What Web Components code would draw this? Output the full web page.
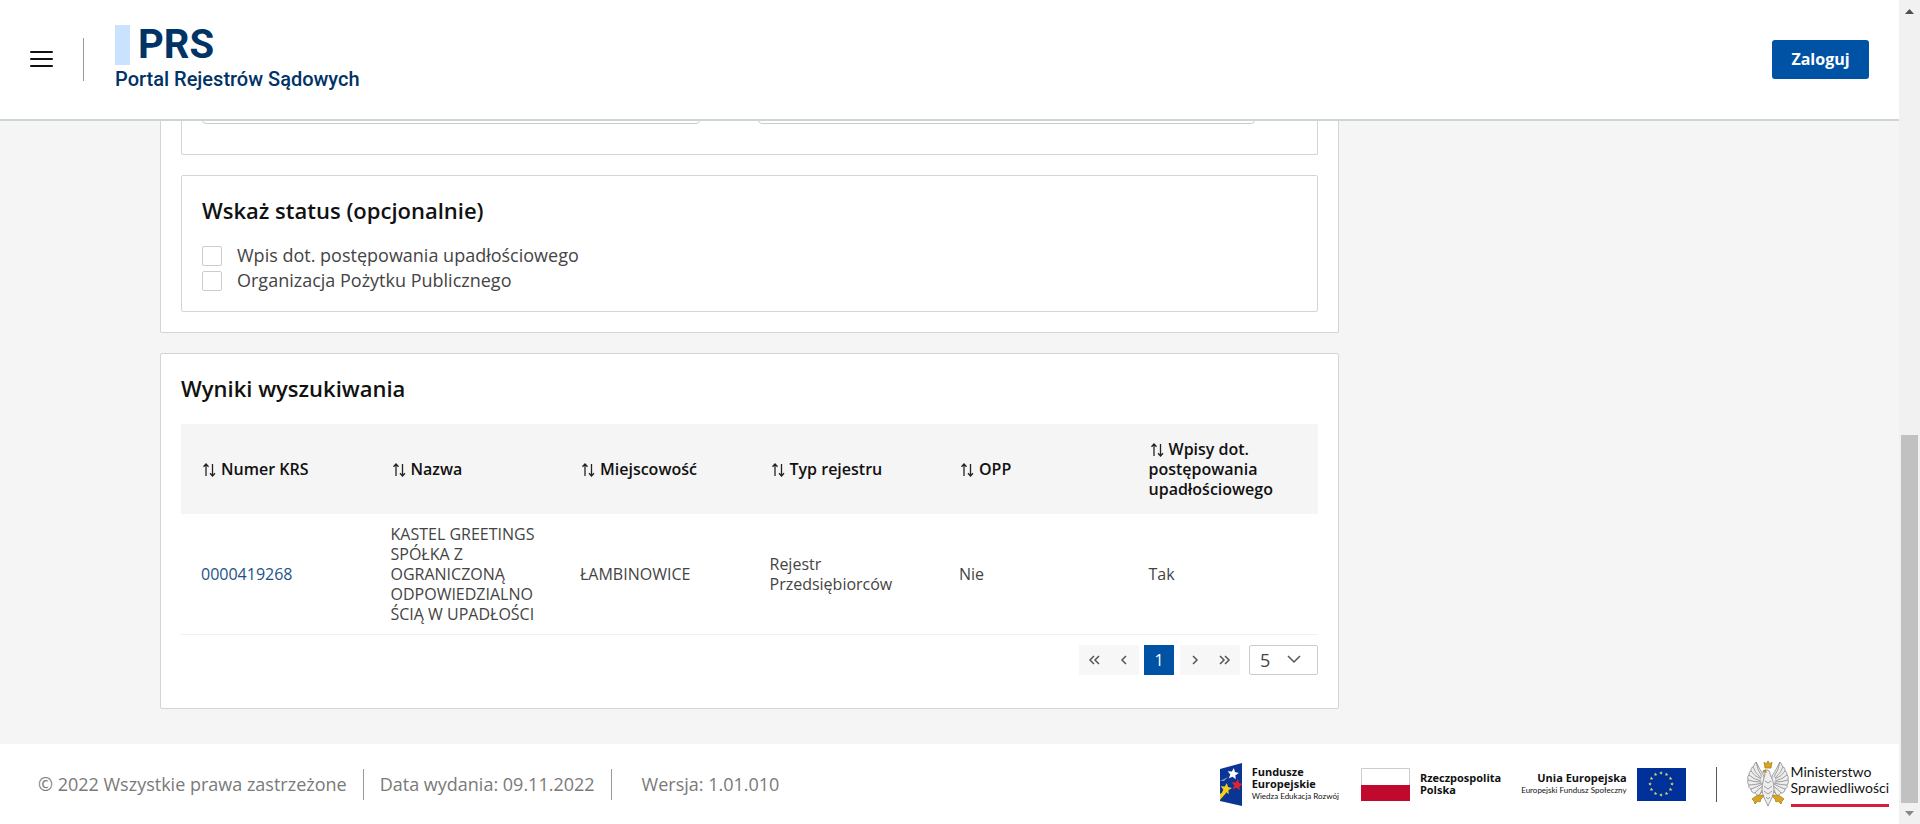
<!DOCTYPE html>
<html lang="pl">
<head>
<meta charset="utf-8">
<title>Portal Rejestrów Sądowych</title>
<style>
html, body { margin: 0; height: 100%; }
body { font-family: "Open Sans", sans-serif; color: #333; background: #f5f5f5; overflow: hidden; }
</style>
</head>
<body>
<prs-app></prs-app>
<script>
const make = (name, html) => customElements.define(name, class extends HTMLElement {
  constructor() {
    super();
    const t = document.createElement('template');
    t.innerHTML = html;
    this.attachShadow({ mode: 'open' }).append(t.content.cloneNode(true));
  }
});

make('prs-header', `
<style>
:host { display: flex; align-items: center; justify-content: space-between; box-sizing: border-box; height: 121px; padding: 0 30px 1px; background: #fff; border-bottom: 2px solid #ccd4d4; }
.left { display: flex; align-items: center; }
button { font: inherit; border: 0; margin: 0; cursor: pointer; }
.menu { display: flex; padding: 0; background: none; }
.rule { width: 1px; height: 43px; margin: 0 31px 0 30px; background: #999; }
a { display: block; color: #003366; text-decoration: none; font-family: Roboto, sans-serif; padding-bottom: 1px; }
.mark { display: flex; align-items: center; gap: 8px; height: 40px; font-size: 40px; font-weight: 700; line-height: 40px; }
.mark i { width: 15px; height: 40px; background: #c9e3ff; }
.name { display: block; font-size: 20px; font-weight: 500; line-height: 28px; }
.login { width: 97px; height: 39px; border-radius: 3px; background: #0052a5; color: #fff; font-size: 16px; font-weight: 700; }
</style>
<div class="left">
<button class="menu" aria-label="Menu"><svg width="23" height="18" viewBox="0 0 23 18" stroke="#111" stroke-width="2" stroke-linecap="round"><path d="M1 2H22M1 9H22M1 16H22"/></svg></button>
<div class="rule"></div>
<a href="#"><span class="mark"><i></i>PRS</span><span class="name">Portal Rejestrów Sądowych</span></a>
</div>
<button class="login">Zaloguj</button>`);

make('prs-card', `
<style>
:host { display: block; box-sizing: border-box; background: #fff; border: 1px solid #d4d4d4; border-radius: 2px; padding: 20px; }
</style><slot></slot>`);

make('prs-heading', `
<style>
:host { display: block; }
h2 { margin: 0; font-size: 22px; font-weight: 600; line-height: 32px; color: #111; }
</style><h2><slot></slot></h2>`);

make('prs-check', `
<style>
:host { display: block; }
label { display: flex; align-items: center; gap: 15px; font-size: 18px; line-height: 25px; color: #444; }
input { appearance: none; box-sizing: border-box; width: 20px; height: 20px; margin: 0; border: 1px solid #ccc; border-radius: 2px; background: #fff; }
</style><label><input type="checkbox"><slot></slot></label>`);

make('prs-filters', `
<style>
:host { display: block; }
.fields { padding: 0 62px 30px 20px; margin-bottom: 20px; border-top: 0; display: grid; grid-template-columns: 1fr 1fr; gap: 58px; }
input { box-sizing: border-box; width: 100%; height: 40px; border: 1px solid #ccc; border-radius: 4px; background: #fff; margin: 0; }
.outer { margin-top: -37px; padding-top: 0; border-top: 0; }
.list { margin-top: 17px; }
.status { padding: 18px 20px; }
</style>
<prs-card class="outer">
<prs-card class="fields"><input aria-label="Nazwa"><input aria-label="Miejscowość"></prs-card>
<prs-card class="status"><prs-heading>Wskaż status (opcjonalnie)</prs-heading>
<div class="list"><prs-check>Wpis dot. postępowania upadłościowego</prs-check><prs-check>Organizacja Pożytku Publicznego</prs-check></div>
</prs-card>
</prs-card>`);

make('prs-sort', `
<style>
:host { display: inline; }
svg { vertical-align: -2px; margin-right: 4px; }
</style><svg width="16" height="14" viewBox="0 0 16 14" fill="none" stroke="#222" stroke-width="1.3"><path d="M5 13V1M2.5 3.8L5 1 7.500 3.8M11.500 1V13M9 10.2L11.500 13 14 10.2"/></svg><slot></slot>`);

make('prs-pager', `
<style>
:host { display: flex; justify-content: flex-end; align-items: center; height: 30px; }
button { width: 30px; height: 30px; padding: 0; border: 0; background: #f7f7f7; display: flex; align-items: center; justify-content: center; font: inherit; font-size: 16px; }
.on { margin: 0 6px 0 5px; background: #0052a5; color: #fff; }
.size { margin-left: 9px; position: relative; display: flex; }
select { appearance: none; box-sizing: border-box; width: 69px; height: 30px; padding: 0 10px; border: 1px solid #ccc; border-radius: 2px; background: #fff; color: #444; font: inherit; font-size: 18px; }
.size svg { position: absolute; right: 17px; top: 10px; pointer-events: none; }
svg { fill: none; stroke: #555; stroke-width: 1.5; }
</style>
<button aria-label="Pierwsza"><svg width="14" height="10"><path d="M7 1L3 5 7 9M12 1L8 5 12 9"/></svg></button>
<button aria-label="Poprzednia"><svg width="14" height="10"><path d="M9 1L5 5 9 9"/></svg></button>
<button class="on">1</button>
<button aria-label="Następna"><svg width="14" height="10"><path d="M5 1l4 4-4 4"/></svg></button>
<button aria-label="Ostatnia"><svg width="14" height="10"><path d="M2 1l4 4-4 4M7 1l4 4-4 4"/></svg></button>
<div class="size"><select aria-label="Liczba wyników na stronie"><option>5</option><option>10</option></select><svg width="14" height="9"><path d="M1 1l6 6 6-6"/></svg></div>`);

make('prs-results', `
<style>
:host { display: block; margin-top: 20px; }
.box { padding: 18px 20px 33px; }
table { width: 100%; border-collapse: collapse; table-layout: fixed; margin: 20px 0 10px; font-size: 16px; line-height: 20px; }
th { height: 90px; box-sizing: border-box; padding: 15px 20px; background: #f5f5f5; color: #111; font-weight: 600; text-align: left; }
td { padding: 10px 20px; color: #444; overflow-wrap: anywhere; border-bottom: 1px solid #f0f0f0; }
a { color: #1c5288; text-decoration: none; }
</style>
<prs-card class="box">
<prs-heading>Wyniki wyszukiwania</prs-heading>
<table>
<thead><tr><th><prs-sort>Numer KRS</prs-sort></th><th><prs-sort>Nazwa</prs-sort></th><th><prs-sort>Miejscowość</prs-sort></th><th><prs-sort>Typ rejestru</prs-sort></th><th><prs-sort>OPP</prs-sort></th><th><prs-sort>Wpisy dot. postępowania upadłościowego</prs-sort></th></tr></thead>
<tbody><tr><td><a href="#">0000419268</a></td><td>KASTEL GREETINGS SPÓŁKA Z OGRANICZONĄ ODPOWIEDZIALNOŚCIĄ W UPADŁOŚCI</td><td>ŁAMBINOWICE</td><td>Rejestr Przedsiębiorców</td><td>Nie</td><td>Tak</td></tr></tbody>
</table>
<prs-pager></prs-pager>
</prs-card>`);

const star = (x, y, r, c) => {
  let p = '';
  for (let i = 0; i < 10; i++) {
    const a = Math.PI * (i / 5 - 0.45), q = i % 2 ? r * 0.45 : r;
    p += (x + q * Math.cos(a)).toFixed(2) + ',' + (y + q * Math.sin(a)).toFixed(2) + ' ';
  }
  return `<polygon points="${p}" fill="${c}"/>`;
};
const euStars = Array.from({ length: 12 }, (_, i) => star(24 + 11 * Math.sin(i * Math.PI / 6), 16 - 11 * Math.cos(i * Math.PI / 6), 1.9, '#d8d860')).join('');
// One wing of the eagle; the other is its mirror image.
const wing = `<path d="M17 15C14 11 12 6 9 1C7 3 7 5 6 6C4 6 4 9 4 10C2 10 2 13 2 14C0 15 1 18 1 19C0 20 1 23 2 24C1 26 3 28 4 28C4 31 6 32 8 32C9 34 12 35 13 33C16 31 17 27 18 23Z" fill="#eee"/><path d="M9 1Q10 8 15 16M6 6Q8 12 14 17M4 10Q7 15 14 18M2 14Q6 18 14 20M1 19Q7 21 14 21M2 24Q8 24 15 22M4 28Q10 26 15 23M8 32Q11 28 16 25M13 33Q15 29 17 26"/>`;

make('prs-footer', `
<style>
:host { display: flex; align-items: center; justify-content: space-between; box-sizing: border-box; min-height: 80px; padding: 0 10px 0 38px; background: #fff; color: #7a7a7a; font-size: 18px; white-space: nowrap; }
.info, .logos, .logo { display: flex; align-items: center; }
.rule { width: 1px; background: #999; height: 31px; margin: 0 16px; }
.rule.wide { margin-right: 30px; }
svg { display: block; }
.logo { color: #111; font-size: 11px; font-weight: 700; line-height: 12px; }
.logo small { display: block; font-family: Lato, sans-serif; font-size: 8px; font-weight: 400; line-height: 12px; }
.fe { gap: 10px; } .rp { gap: 10px; margin-left: 22px; } .ue { gap: 10px; margin-left: 20px; text-align: right; }
.logos .rule { height: 35px; background: #555; margin: 0 30px; }
.ms { gap: 2px; font-family: Lato, sans-serif; font-size: 14px; line-height: 16px; font-weight: 400; }
.ms span { display: block; border-bottom: 3px solid #d81e3a; padding: 2px 0 8px; }
</style>
<div class="info"><span>© 2022 Wszystkie prawa zastrzeżone</span><div class="rule"></div><span>Data wydania: 09.11.2022</span><div class="rule wide"></div><span>Wersja: 1.01.010</span></div>
<div class="logos">
<div class="logo fe"><svg width="22" height="43" viewBox="0 0 22 43"><path d="M0 6L22 0V43L0 38Z" fill="#0b3595"/><path d="M0 18L8 14 4 18Z" fill="#fff" opacity=".5"/><path d="M0 31L6 27 6 30 0 37Z" fill="#f8cf18"/>${star(13, 11, 6, '#fff')}${star(17, 22, 6, '#e3222e')}${star(6, 26, 6, '#f8cf18')}</svg><div>Fundusze<br>Europejskie<small>Wiedza Edukacja Rozwój</small></div></div>
<div class="logo rp"><svg width="49" height="33"><path d="M.5.5H48.5V32.5H.5Z" fill="#fff" stroke="#ccc"/><path d="M0 17H49V33H0Z" fill="#c1082d"/></svg><div>Rzeczpospolita<br>Polska</div></div>
<div class="logo ue"><div>Unia Europejska<small>Europejski Fundusz Społeczny</small></div><svg width="49" height="33"><path d="M0 0H49V33H0Z" fill="#00309a"/>${euStars}</svg></div>
<div class="rule"></div>
<div class="logo ms"><svg width="42" height="46" viewBox="0 0 42 46" fill="none" stroke="#888" stroke-width=".8">${wing}<g transform="translate(42 0) scale(-1 1)">${wing}</g><path d="M19 9C15 9 15 12 18 13C17 18 15 22 15 28C15 34 18 38 21 45C24 38 27 34 27 28C27 22 25 17 23 13C23 10 22 9 19 9Z" fill="#eee"/><path d="M18 20L21 22 24 20M17 25L21 28 25 25M17 30L21 33 25 30M19 36L21 38 23 36"/><path d="M17 1L19 3 21 0 23 3 25 1 24 7H18ZM16 10L19 9 19 12Z" fill="#d9a520" stroke="#a98322"/><path d="M14 34L9 35 5 38 7 40 8 43 11 40 13 41 14 38 17 35ZM28 34L33 35 37 38 35 40 34 43 31 40 29 41 28 38 25 35Z" fill="#d9a520" stroke="#a98322"/></svg><span>Ministerstwo<br>Sprawiedliwości</span></div>
</div>`);

make('prs-scroll', `
<style>
:host { display: flex; flex-direction: column; align-items: center; box-sizing: border-box; background: #f1f1f1; padding: 9px 0 8px; }
.thumb { width: 17px; height: 368px; margin-top: auto; background: #c1c1c1; margin-bottom: 8px; }
</style>
<svg width="9" height="5"><path d="M0 5L4.5 0 9 5Z" fill="#505050"/></svg>
<div class="thumb"></div>
<svg width="9" height="5"><path d="M0 0L4.5 5 9 0Z" fill="#888"/></svg>`);

make('prs-app', `
<style>
:host { display: grid; grid-template-columns: 1fr 21px; height: 100vh; }
.page { display: flex; flex-direction: column; min-width: 0; min-height: 0; }
prs-header { position: relative; z-index: 1; flex: none; }
main { flex: 1; padding: 0 560px 0 160px; }
</style>
<div class="page"><prs-header></prs-header><main><prs-filters></prs-filters><prs-results></prs-results></main><prs-footer></prs-footer></div><prs-scroll></prs-scroll>`);
</script>
</body>
</html>
